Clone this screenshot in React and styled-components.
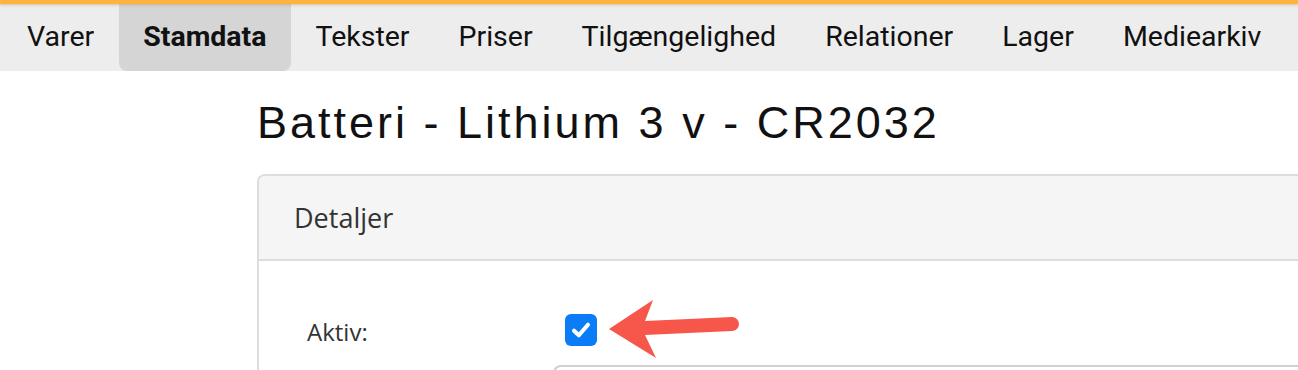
import React from "react";
import styled, { createGlobalStyle } from "styled-components";

const GlobalStyle = createGlobalStyle`
  html, body {
    margin: 0;
    padding: 0;
    background: #ffffff;
    overflow: hidden;
  }
`;

const Page = styled.div`
  width: 1298px;
  height: 370px;
  overflow: hidden;
  background: #ffffff;
`;

const TopBar = styled.div`
  height: 4px;
  background: #fdb43d;
  box-shadow: 0 1px 3px rgba(160, 110, 20, 0.35);
  position: relative;
  z-index: 2;
`;

const TabBar = styled.nav`
  display: flex;
  height: 67px;
  padding-left: 2.5px;
  background: #ededed;
`;

const Tab = styled.div`
  display: flex;
  align-items: center;
  padding: 0 24.5px 3px;
  font-family: Roboto, "Liberation Sans", sans-serif;
  font-size: 28.5px;
  font-weight: ${(p) => (p.active ? 700 : 400)};
  color: #111111;
  background: ${(p) => (p.active ? "#d5d5d5" : "transparent")};
  border-radius: 0 0 8px 8px;
  white-space: nowrap;
`;

const Content = styled.main`
  padding-left: 257px;
`;

const Title = styled.h1`
  margin: 0;
  padding-top: 26px;
  height: 103px;
  box-sizing: border-box;
  font-family: "Liberation Sans", Arial, sans-serif;
  font-weight: 400;
  font-size: 45px;
  line-height: 52px;
  letter-spacing: 3px;
  color: #111111;
`;

const Card = styled.section`
  border: 2px solid #dddddd;
  border-right: none;
  border-radius: 8px 0 0 0;
  background: #ffffff;
  font-family: "Open Sans", "Noto Sans", sans-serif;
`;

const CardHeader = styled.div`
  height: 83px;
  display: flex;
  align-items: center;
  padding-left: 35px;
  background: #f5f5f5;
  border-bottom: 2px solid #dddddd;
  border-radius: 8px 0 0 0;
  font-size: 27px;
  color: #333333;
`;

const CardBody = styled.div`
  padding: 52px 0 0 48px;
`;

const FieldRow = styled.div`
  display: flex;
  align-items: center;
  height: 34px;
`;

const Label = styled.label`
  width: 258px;
  font-size: 24px;
  color: #333333;
  padding-top: 2px;
`;

const CheckBox = styled.span`
  width: 32px;
  height: 32px;
  border-radius: 6px;
  background: #0b7cf7;
  display: inline-flex;
  align-items: center;
  justify-content: center;
`;

const ArrowWrap = styled.span`
  display: inline-flex;
  margin-left: 12px;
  margin-top: -2px;
`;

const InputLine = styled.div`
  margin: 18px 0 0 246px;
  height: 20px;
  border: 2px solid #d0d0d0;
  border-bottom: none;
  border-right: none;
  border-radius: 8px 0 0 0;
`;

const tabs = [
  "Varer",
  "Stamdata",
  "Tekster",
  "Priser",
  "Tilgængelighed",
  "Relationer",
  "Lager",
  "Mediearkiv",
];

const App = () => {
  return (
    <Page>
      <GlobalStyle />
      <TopBar />
      <TabBar>
        {tabs.map((t) => (
          <Tab key={t} active={t === "Stamdata"}>
            {t}
          </Tab>
        ))}
      </TabBar>
      <Content>
        <Title>Batteri - Lithium 3 v - CR2032</Title>
        <Card>
          <CardHeader>Detaljer</CardHeader>
          <CardBody>
            <FieldRow>
              <Label>Aktiv:</Label>
              <CheckBox>
                <svg width="24" height="24" viewBox="0 0 20 20">
                  <path
                    d="M4.2 10.6 L8.2 14.4 L15.8 5.6"
                    fill="none"
                    stroke="#ffffff"
                    strokeWidth="3.4"
                    strokeLinecap="round"
                    strokeLinejoin="round"
                  />
                </svg>
              </CheckBox>
              <ArrowWrap>
                <svg width="132" height="58" viewBox="0 0 132 58">
                  <path
                    d="M0 29 L44 0 L36 21 L123 17 A7 7 0 0 1 123 31 L36 35 L47 58 Z"
                    fill="#f6574a"
                  />
                </svg>
              </ArrowWrap>
            </FieldRow>
            <InputLine />
          </CardBody>
        </Card>
      </Content>
    </Page>
  );
};

export default App;
